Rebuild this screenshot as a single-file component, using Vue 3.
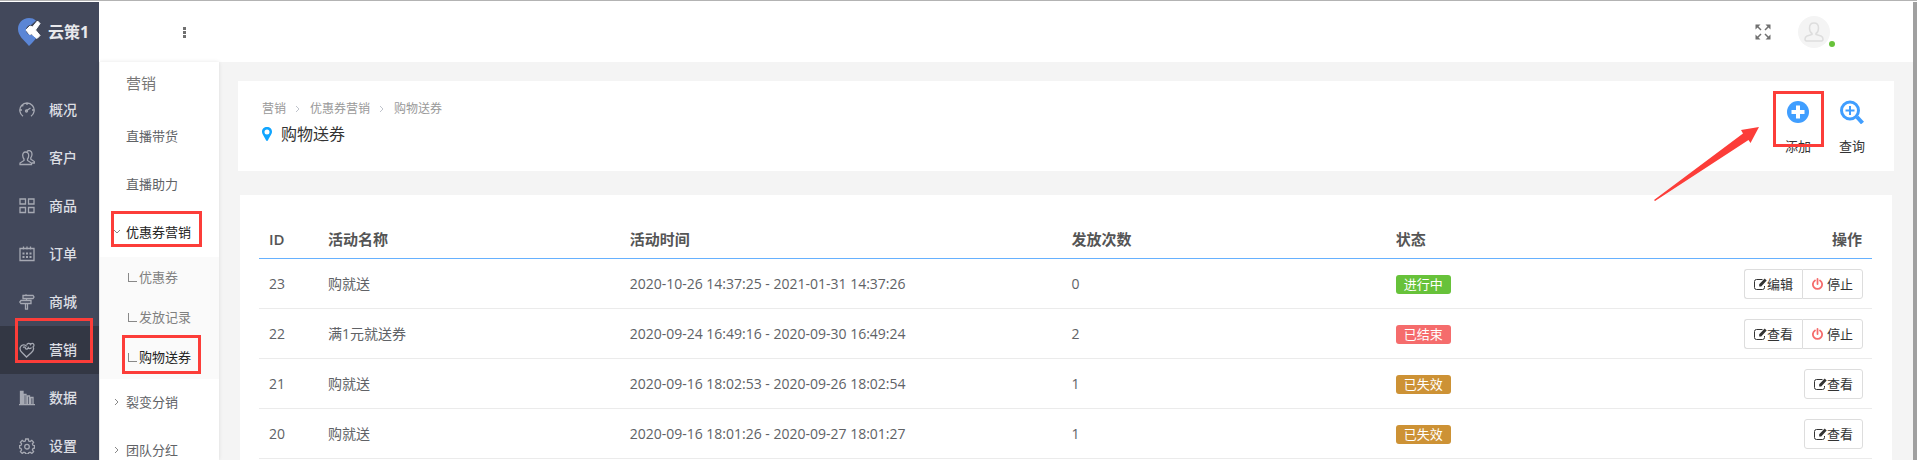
<script setup>
import { ref } from 'vue'

const menus = [
  { name: '概况', icon: 'gauge' },
  { name: '客户', icon: 'users' },
  { name: '商品', icon: 'grid' },
  { name: '订单', icon: 'calendar' },
  { name: '商城', icon: 'sign' },
  { name: '营销', icon: 'heart' },
  { name: '数据', icon: 'chart' },
  { name: '设置', icon: 'gear' }
]
const current = ref('营销')

const coupons = [
  { name: '优惠券' },
  { name: '发放记录' },
  { name: '购物送券', active: true }
]

const crumbs = ['营销', '优惠券营销', '购物送券']

const rows = [
  { id: 23, name: '购就送', time: '2020-10-26 14:37:25 - 2021-01-31 14:37:26', count: 0, state: '进行中', type: 'success', edit: '编辑', stop: true },
  { id: 22, name: '满1元就送券', time: '2020-09-24 16:49:16 - 2020-09-30 16:49:24', count: 2, state: '已结束', type: 'danger', edit: '查看', stop: true },
  { id: 21, name: '购就送', time: '2020-09-16 18:02:53 - 2020-09-26 18:02:54', count: 1, state: '已失效', type: 'warning', edit: '查看' },
  { id: 20, name: '购就送', time: '2020-09-16 18:01:26 - 2020-09-27 18:01:27', count: 1, state: '已失效', type: 'warning', edit: '查看' }
]
</script>

<template>
  <div class="page">
    <aside class="sidebar">
      <div class="logo">
        <svg width="24" height="28" viewBox="0 0 24 28">
          <path fill="#5b86d6" d="M11 0C4.500 0 0 5 0 11c0 7 6 11 11 17 4-4 7-7 9-10.500L13 17a5 5 0 1 1 0-10l5-4.500C16 .8 14 0 11 0z" />
          <path fill="#fff" stroke="#fff" stroke-linejoin="round" d="M8 12l4-4 2.500 1L19.500 3 22 5.500 17.500 12l4.500 5.500-3 3-5.500-4.500-2 .5z" />
        </svg>
        <span>云策1</span>
      </div>
      <nav class="menu">
        <a v-for="item in menus" :key="item.name" href="#" class="menu-item" :class="{ active: item.name === current }" @click.prevent="current = item.name">
          <svg class="menu-icon" width="16" height="16" viewBox="0 0 16 16">
            <template v-if="item.icon === 'gauge'">
              <path d="M4 14.200A7.200 7.200 0 1 1 12 14.200M7 9l4.500-3M8 1v2M1 8h2M13 8h2M3 3l1.300 1.300" />
              <circle cx="7.500" cy="9" r="1" />
            </template>
            <template v-else-if="item.icon === 'users'">
              <path d="M6.500 2C4.500 2 3.600 3.600 3.700 5.500c.1 1.700.6 2.800 1.300 3.500v1.500L1 13v1.500h11.500V13L8.500 10.500V9c.8-.8 1.200-2 1.200-3.500C9.700 3.500 8.500 2 6.500 2zM8 1.500C10-.3 13 .8 13 4c0 1.800-.5 3-1.200 3.700v1.500L15.300 11.500V13H13" />
            </template>
            <template v-else-if="item.icon === 'grid'">
              <path d="M1 1h5.500v5H1zM9.500 1H15v5H9.500zM1 9.500h5.500v5H1zM9.500 9.500H15v5H9.500z" />
            </template>
            <template v-else-if="item.icon === 'calendar'">
              <path d="M1 2.500h14v12H1zM4.500.5v3M8 .5v3M11.500.5v3" />
              <path d="M3.500 7.500h9M3.500 11h9" stroke-width="2" stroke-dasharray="2 1.500" />
            </template>
            <template v-else-if="item.icon === 'sign'">
              <path d="M4 1.500h10l1 1.500-1 1.500H4zM2 6.500h10v3H2L.8 8zM7 .3v1.200M6.500 9.500v6M8.500 9.500v6M6 15.200h3M7.500 4.500v2" />
            </template>
            <template v-else-if="item.icon === 'heart'">
              <path d="M7.500 4.500C6 2 2.500 2.500 1.300 5.300c-.8 2 .2 3.700 1.700 5.200L7.500 15l5-4.500c2-1.800 2.500-4 1.500-5.500 1.500-.8 1.200-3.500-.5-3.700-1-.1-1.700.5-1.900 1.200C10.500.8 8 1 7.800 3.200M4 5.500c1-1 2.500-.5 2.500 1 .8 1 2.500.6 2.800-.8.800 1.200 2.500 1.200 3.200-.2" />
            </template>
            <template v-else-if="item.icon === 'chart'">
              <path d="M0 14.700h16M1.500 14V1.500h2.500V14M5 14V4.500h2V14M8.500 14V6h2v8M11.800 14V7.500H14V14M2.700 2v12" />
            </template>
            <template v-else>
              <path d="M6.700 1h2.600l.4 2 1.400.6 1.700-1.200 1.800 1.800-1.200 1.700.6 1.400 1.500.3v2.500l-1.500.4-.6 1.400 1.200 1.700-1.800 1.800-1.700-1.200-1.400.6-.4 1.200H6.700l-.4-1.200-1.400-.6-1.700 1.200-1.800-1.800 1.200-1.700-.6-1.400L.6 10V7.600L2 7.300l.6-1.400-1.200-1.700 1.800-1.800 1.700 1.200 1.400-.6z" />
              <circle cx="8" cy="8.700" r="2.300" />
            </template>
          </svg>
          <span>{{ item.name }}</span>
          <i v-if="item.icon === 'heart'" class="mark mark-menu"></i>
        </a>
      </nav>
    </aside>

    <div class="main">
      <header class="topbar">
        <button class="more" aria-label="菜单"><i></i><i></i><i></i></button>
        <div class="user">
          <button class="full" aria-label="全屏">
            <svg width="16" height="16" viewBox="0 0 16 16" fill="#707070" stroke="#707070" stroke-width="1.500">
              <path stroke="none" d="M.5.500h5L.5 5.500zM15.500.500v5l-5-5zM.5 15.500v-5l5 5zM15.500 15.500h-5l5-5z" />
              <path fill="none" d="M2 2l4 4M14 2l-4 4M2 14l4-4M14 14l-4-4" />
            </svg>
          </button>
          <button class="avatar" aria-label="账号">
            <svg width="20" height="20" viewBox="0 0 20 20" fill="none" stroke="#ddd" stroke-width="1.500">
              <path d="M10 1C7 1 5.500 3 5.500 6c0 2.500.8 4.500 2.500 5.500v1L3 14c-1.500.6-2 1.500-2 3 0 1.300.5 2 1.500 2h15c1 0 1.500-.7 1.500-2 0-1.500-.5-2.400-2-3l-5-1.500v-1c1.700-1 2.500-3 2.500-5.500 0-3-1.500-5-4.500-5z" />
            </svg>
            <i class="online"></i>
          </button>
        </div>
      </header>

      <div class="body">
        <nav class="submenu">
          <h2>营销</h2>
          <a href="#" class="sub-item">直播带货</a>
          <a href="#" class="sub-item">直播助力</a>
          <a href="#" class="sub-item open">
            <svg class="arrow" width="6" height="6" viewBox="0 0 6 6"><path d="M0 1l3 3 3-3" /></svg>优惠券营销
            <i class="mark mark-coupon"></i>
          </a>
          <div class="children">
            <a v-for="c in coupons" :key="c.name" href="#" class="child" :class="{ active: c.active }">
              <i class="corner"></i>{{ c.name }}
              <i v-if="c.active" class="mark mark-child"></i>
            </a>
          </div>
          <a v-for="n in ['裂变分销', '团队分红']" :key="n" href="#" class="sub-item">
            <svg class="arrow" width="6" height="6" viewBox="0 0 6 6"><path d="M1 0l3 3-3 3" /></svg>{{ n }}
          </a>
        </nav>

        <main class="content">
          <section class="head">
            <div>
              <div class="crumbs">
                <template v-for="(c, i) in crumbs" :key="c">
                  <svg v-if="i" width="4" height="8" viewBox="0 0 4 8"><path d="M0 1l3 3-3 3" /></svg>
                  <a href="#">{{ c }}</a>
                </template>
              </div>
              <h1>
                <svg width="10" height="14" viewBox="0 0 10 14"><path fill="#10a5ff" fill-rule="evenodd" d="M5 0C2 0 0 2 0 4.800 0 7 2 9 4 13.300c.4.900 1.600.9 2 0C8 9 10 7 10 4.800 10 2 8 0 5 0zm0 2.400a2.500 2.500 0 1 1 0 5 2.500 2.500 0 0 1 0-5z" /></svg>
                购物送券
              </h1>
            </div>
            <div class="actions">
              <button class="action">
                <svg width="24" height="24" viewBox="0 0 24 24">
                  <circle cx="12" cy="12" r="11" fill="#409eff" />
                  <path d="M12 5.500v13M5.500 12h13" stroke="#fff" stroke-width="4" />
                </svg>
                <span>添加</span>
                <i class="mark mark-add"></i>
                <svg class="pointer" width="106" height="76" viewBox="0 0 106 76">
                  <path fill="#fc3d39" d="M106 1L88 4l2 3.500L1 74l1 1L95.500 14l2 3z" />
                </svg>
              </button>
              <button class="action">
                <svg width="24" height="24" viewBox="0 0 24 24" fill="none" stroke="#409eff">
                  <circle cx="10" cy="10.500" r="8.500" stroke-width="3" />
                  <path d="M10 6v9M5.500 10.500h9" stroke-width="2" />
                  <path d="M17 17l5.500 6" stroke-width="4" />
                </svg>
                <span>查询</span>
              </button>
            </div>
          </section>

          <section class="card">
            <table>
              <thead>
                <tr>
                  <th class="c-id">ID</th>
                  <th class="c-name">活动名称</th>
                  <th class="c-time">活动时间</th>
                  <th class="c-count">发放次数</th>
                  <th class="c-state">状态</th>
                  <th class="ops">操作</th>
                </tr>
              </thead>
              <tbody>
                <tr v-for="row in rows" :key="row.id">
                  <td>{{ row.id }}</td>
                  <td>{{ row.name }}</td>
                  <td>{{ row.time }}</td>
                  <td>{{ row.count }}</td>
                  <td><span class="tag" :class="row.type">{{ row.state }}</span></td>
                  <td class="ops">
                    <div class="btns">
                      <button>
                        <svg width="13" height="12" viewBox="0 0 13 12" fill="none" stroke="#333">
                          <path d="M8.500 1.500H2.500a2 2 0 0 0-2 2v6a2 2 0 0 0 2 2h6a2 2 0 0 0 2-2V8" />
                          <path fill="#333" stroke="none" d="M10.700.5l2 2-5.500 6H5.200V6.200z" />
                        </svg>{{ row.edit }}
                      </button>
                      <button v-if="row.stop">
                        <svg class="power" width="11" height="12" viewBox="0 0 11 12" fill="none" stroke="#f56c6c" stroke-width="1.800" stroke-linecap="round">
                          <path d="M3 2.500a4.600 4.600 0 1 0 5 0M5.500 1v5" />
                        </svg>停止
                      </button>
                    </div>
                  </td>
                </tr>
              </tbody>
            </table>
          </section>
        </main>
      </div>
    </div>
    <div class="scroll"></div>
  </div>
</template>

<style>
body {
  overflow: hidden;
}
</style>

<style scoped>
* {
  box-sizing: border-box;
}

.page {
  display: flex;
  height: 100vh;
  padding-top: 1px;
  border-top: 1px solid #b3b3b3;
  background: #fff;
  font: 14px/20px "Open Sans", "Noto Sans CJK SC", sans-serif;
  color: #606266;
}

a {
  color: inherit;
  text-decoration: none;
}

button {
  padding: 0;
  border: 0;
  background: none;
  font: inherit;
  color: #333;
  cursor: pointer;
}

/* sidebar */
.sidebar {
  flex: 0 0 99px;
  background: #42485b;
  overflow: hidden;
}

.logo {
  display: flex;
  align-items: center;
  gap: 6px;
  height: 60px;
  padding-left: 18px;
  font-size: 16px;
  font-weight: 700;
  color: #e8e9ec;
}

.menu {
  padding-top: 24px;
}

.menu-item {
  position: relative;
  display: flex;
  align-items: center;
  gap: 14px;
  height: 48px;
  padding-left: 19px;
  font-weight: 500;
  color: #dcdee3;
}

.menu-item.active {
  background: #333744;
}

.menu-icon {
  fill: none;
  stroke: #a6a9b3;
  stroke-width: 1.3;
}

/* red frames */
.mark {
  position: absolute;
  z-index: 5;
  border: 3px solid #fc3d39;
  pointer-events: none;
}

.mark-menu {
  inset: -8px 6px 11px 15px;
}

.mark-coupon {
  inset: 2px 17px 10px 11px;
}

.mark-child {
  inset: -3px 18px 4px 22px;
}

.mark-add {
  inset: -9px -13px 9px -12px;
}

/* top bar */
.main {
  display: flex;
  flex: 1;
  flex-direction: column;
  min-width: 0;
}

.topbar {
  display: flex;
  flex: 0 0 60px;
  align-items: center;
  justify-content: space-between;
  padding: 0 83px 0 84px;
}

.more {
  display: flex;
  flex-direction: column;
  gap: 1px;
}

.more i {
  width: 3px;
  height: 3px;
  background: #707070;
}

.user {
  display: flex;
  align-items: center;
  gap: 27px;
}

.full,
.avatar,
.action {
  display: flex;
  align-items: center;
}

.avatar {
  position: relative;
  justify-content: center;
  width: 32px;
  height: 32px;
  border-radius: 50%;
  background: #f4f4f4;
}

.online {
  position: absolute;
  right: -5px;
  bottom: 1px;
  width: 6px;
  height: 6px;
  border-radius: 50%;
  background: #67c23a;
}

.body {
  display: flex;
  flex: 1;
  min-height: 0;
  background: #f4f4f4;
}

/* second level menu */
.submenu {
  flex: 0 0 120px;
  border-left: 1px solid #e8e8e8;
  background: #fff;
  box-shadow: 0 0 4px rgba(0, 0, 0, 0.1);
  font-size: 13px;
  overflow: hidden;
}

.submenu h2 {
  margin: 0 0 9px;
  padding-left: 26px;
  font-size: 15px;
  font-weight: 400;
  line-height: 42px;
  color: #777;
}

.sub-item {
  position: relative;
  display: flex;
  align-items: center;
  height: 48px;
  padding: 0 0 2px 26px;
}

.open {
  color: #222;
}

.arrow {
  position: absolute;
  left: 14px;
  fill: none;
  stroke: #888;
}

.children {
  padding: 1px 0;
  background: #fafafa;
}

.child {
  position: relative;
  display: flex;
  align-items: center;
  gap: 2px;
  height: 40px;
  padding: 0 0 2px 28px;
  color: #808080;
}

.child.active {
  color: #222;
}

.corner {
  width: 9px;
  height: 9px;
  border: solid #888;
  border-width: 0 0 1px 1px;
}

/* content */
.content {
  flex: 1;
  min-width: 0;
  padding: 19px 19px 0;
  overflow: hidden;
}

.head {
  display: flex;
  justify-content: space-between;
  height: 90px;
  padding: 18px 29px 0 24px;
  background: #fff;
}

.crumbs {
  display: flex;
  align-items: center;
  gap: 10px;
  font-size: 12px;
  color: #999;
}

.crumbs svg {
  fill: none;
  stroke: #c0c4cc;
}

h1 {
  display: flex;
  align-items: center;
  gap: 9px;
  margin: 3px 0 0;
  font-size: 16px;
  font-weight: 400;
  line-height: 24px;
  color: #333;
}

.actions {
  display: flex;
  align-items: flex-start;
  gap: 28px;
  padding-top: 1px;
}

.action {
  position: relative;
  flex-direction: column;
  gap: 12px;
  font-size: 13px;
}

.pointer {
  position: absolute;
  top: 26px;
  right: 52px;
}

.card {
  margin: 24px 2px 0;
  padding: 19px 20px 19px 19px;
  background: #fff;
}

table {
  width: 100%;
  border-collapse: separate;
  border-spacing: 0;
  table-layout: fixed;
}

th,
td {
  height: 50px;
  padding: 0 10px;
  border-bottom: 1px solid #ebebeb;
  text-align: left;
}

th {
  height: 45px;
  padding-top: 5px;
  border-bottom-color: #66b1ff;
  font-size: 15px;
  font-weight: 600;
  color: #555;
}

.c-id {
  width: 59px;
}

.c-name {
  width: 18.7%;
}

.c-time {
  width: 27.4%;
}

.c-count {
  width: 20.1%;
}

.ops {
  text-align: right;
}

td.ops {
  padding-right: 9px;
}

.tag {
  display: inline-block;
  padding: 0 8px;
  border-radius: 3px;
  font-size: 13px;
  line-height: 19px;
  color: #fff;
}

.success {
  background: #67c23a;
}

.danger {
  background: #f56c6c;
}

.warning {
  background: #cd9235;
}

.btns {
  display: inline-flex;
  vertical-align: middle;
}

.btns button {
  display: flex;
  align-items: center;
  height: 30px;
  padding: 0 9px;
  border: 1px solid #ddd;
  border-radius: 3px;
  font-size: 13px;
}

.btns button:first-child:not(:last-child) {
  border-right: 0;
  border-radius: 3px 0 0 3px;
}

.btns button:last-child:not(:first-child) {
  border-radius: 0 3px 3px 0;
}

.power {
  margin-right: 4px;
}

.scroll {
  flex: 0 0 4px;
  background: #a0a0a0;
}
</style>
